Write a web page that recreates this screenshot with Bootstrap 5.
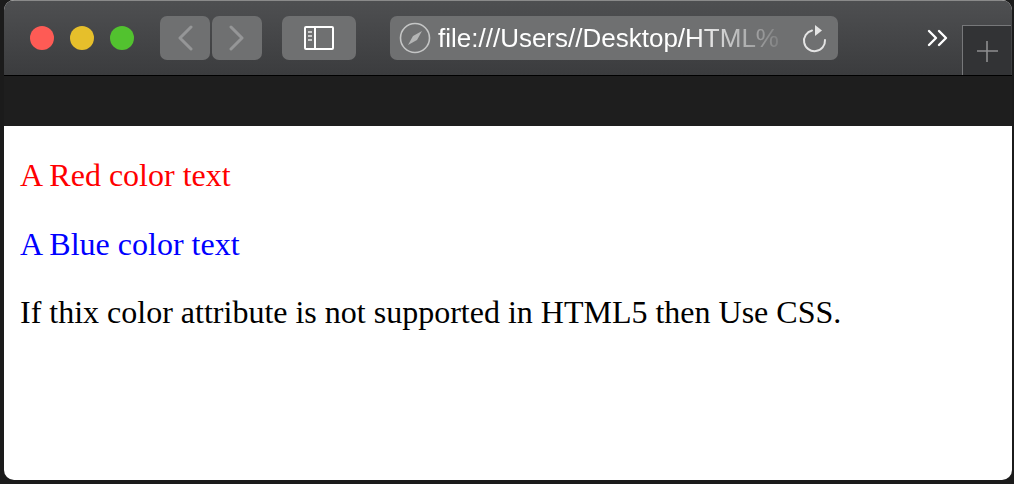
<!DOCTYPE html>
<html lang="en">
<head>
    <meta charset="UTF-8">
    <meta name="viewport" content="width=device-width, initial-scale=1">
    <title>Colors</title>
    <link href="https://cdn.jsdelivr.net/npm/bootstrap@5.3.0/dist/css/bootstrap.min.css" rel="stylesheet">
    <style>
        html, body { height: 100%; }
        body { background: #1b1b1b; overflow: hidden; }

        /* Ventana del navegador */
        .win-frame { height: 480px; margin: 0 2px 0 4px; border-radius: 10px; overflow: hidden; background: #fff; }
        .win-toolbar { height: 76px; padding-left: 26px; background: linear-gradient(#4e4f51, #3b3c3e); border-top: 1px solid #8a8a8a; border-bottom: 1px solid #000; }
        .win-favbar { height: 50px; background: #1e1e1e; }

        .traffic { width: 24px; height: 24px; border-radius: 50%; margin-right: 16px; }
        .traffic-red { background: #fe5b55; }
        .traffic-yellow { background: #e6bf2b; }
        .traffic-green { background: #52c22f; margin-right: 0; }

        .tool-btn { height: 44px; background: #6f7071; border-radius: 7px; }
        .tool-nav { width: 50px; }
        .tool-back { margin-left: 26px; margin-right: 2px; }
        .tool-side { width: 74px; margin-left: 20px; }

        .url-box { width: 448px; height: 44px; margin-left: 34px; padding: 0 7px 0 9px; background: #6f7071; border-radius: 7px; }
        .url-text { margin-left: 7px; white-space: nowrap; color: #fff; font: 26px/44px "Liberation Sans", sans-serif;
            -webkit-mask-image: linear-gradient(90deg, #000 74%, rgba(0,0,0,.12) 100%); mask-image: linear-gradient(90deg, #000 74%, rgba(0,0,0,.12) 100%); }

        .more-btn { margin-left: 88px; margin-right: 12px; }
        .new-tab { width: 49px; height: 50px; background: #323335; border-left: 1px solid #77787a; border-top: 1px solid #77787a; }

        /* Contenido de la página */
        .page-body { padding: 31px 16px 0; color: #000; font: 32px/36px "Liberation Serif", serif; }
        .page-body p { margin: 0 0 32.6px; }
        .txt-red { color: #f00; }
        .txt-blue { color: #00f; }
    </style>
</head>
<body>
    <div class="win-frame d-flex flex-column">
        <div class="win-toolbar d-flex align-items-center flex-shrink-0">
            <span class="traffic traffic-red"></span>
            <span class="traffic traffic-yellow"></span>
            <span class="traffic traffic-green"></span>

            <div class="tool-btn tool-nav tool-back d-flex align-items-center justify-content-center">
                <svg width="16" height="26" viewBox="0 0 16 26" fill="none" stroke="#959697" stroke-width="3" stroke-linecap="round" stroke-linejoin="round"><path d="M14 2 3 13l11 11"/></svg>
            </div>
            <div class="tool-btn tool-nav d-flex align-items-center justify-content-center">
                <svg width="16" height="26" viewBox="0 0 16 26" fill="none" stroke="#959697" stroke-width="3" stroke-linecap="round" stroke-linejoin="round"><path d="M2 2l11 11L2 24"/></svg>
            </div>
            <div class="tool-btn tool-side d-flex align-items-center justify-content-center">
                <svg width="30" height="24" viewBox="0 0 30 24" fill="none" stroke="#fff" stroke-width="2"><rect x="1" y="1" width="28" height="22" rx="1"/><path d="M11 1v22"/><path d="M4 6h4M4 10h4M4 14h4" stroke="#ccc"/></svg>
            </div>

            <div class="url-box d-flex align-items-center">
                <svg class="flex-shrink-0" width="32" height="32" viewBox="0 0 32 32" fill="none"><circle cx="16" cy="16" r="14.5" stroke="#c4c5c5" stroke-width="1.6"/><path d="M23 9 18 18 9 23l5-9z" fill="#b4b5b5"/></svg>
                <div class="url-text">file:///Users//Desktop/HTML%</div>
                <svg class="flex-shrink-0 ms-auto me-1" width="26" height="30" viewBox="0 0 26 30" fill="none"><path d="M11 7.5a10.5 10.5 0 1 0 13 9.5" stroke="#e4e4e4" stroke-width="2" stroke-linecap="round"/><path d="M14 2l7 5.5-7 5.5z" fill="#e4e4e4"/></svg>
            </div>

            <svg class="more-btn flex-shrink-0" width="24" height="20" viewBox="0 0 24 20" fill="none" stroke="#fff" stroke-width="2.4" stroke-linecap="round" stroke-linejoin="round"><path d="M3 3l7 7-7 7M13 3l7 7-7 7"/></svg>
            <div class="new-tab align-self-end d-flex align-items-center justify-content-center flex-shrink-0">
                <svg width="24" height="24" viewBox="0 0 24 24" stroke="#8e8f90" stroke-width="1.6"><path d="M12 2v21M2 12h21"/></svg>
            </div>
        </div>
        <div class="win-favbar flex-shrink-0"></div>
        <div class="page-body flex-grow-1">
            <p class="txt-red">A Red color text</p>
            <p class="txt-blue">A Blue color text</p>
            <p>If thix color attribute is not supported in HTML5 then Use CSS.</p>
        </div>
    </div>
    <script src="https://cdn.jsdelivr.net/npm/bootstrap@5.3.0/dist/js/bootstrap.bundle.min.js"></script>
</body>
</html>
